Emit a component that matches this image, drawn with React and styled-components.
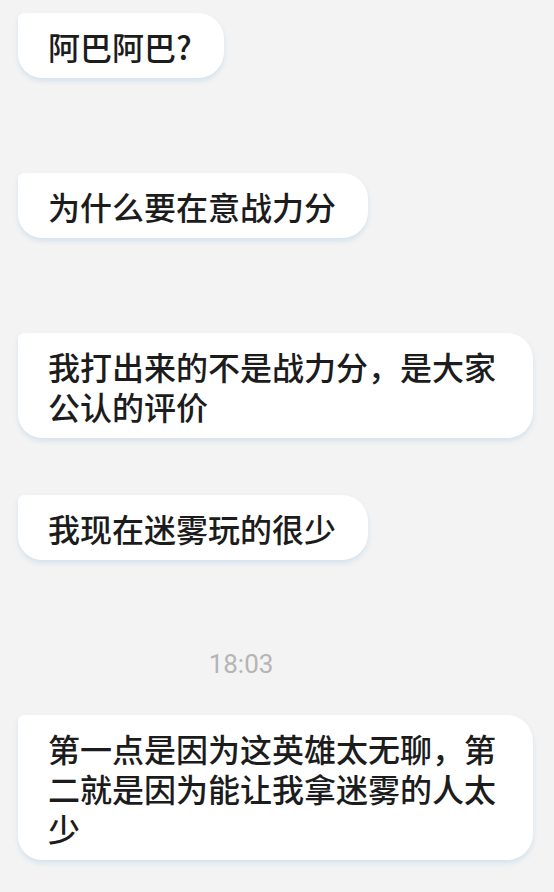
import styled, { createGlobalStyle } from 'styled-components'

const GlobalStyle = createGlobalStyle`
  html, body {
    margin: 0;
    padding: 0;
    background: #f3f3f3;
  }
  body {
    font-family: "Noto Sans CJK SC", "Noto Sans", sans-serif;
  }
`

const messages = [
  { id: 1, text: '阿巴阿巴?', top: 13 },
  { id: 2, text: '为什么要在意战力分', top: 95 },
  { id: 3, text: '我打出来的不是战力分，是大家公认的评价', top: 95 },
  { id: 4, text: '我现在迷雾玩的很少', top: 57 },
  { id: 'time', time: '18:03', top: 89 },
  { id: 5, text: '第一点是因为这英雄太无聊，第二就是因为能让我拿迷雾的人太少', top: 36 },
]

export default function App() {
  return (
    <>
      <GlobalStyle />
      <Chat>
        {messages.map((m) =>
          m.time ? (
            <TimeRow key={m.id} $top={m.top}>
              {m.time}
            </TimeRow>
          ) : (
            <Bubble key={m.id} $top={m.top}>
              {m.text}
            </Bubble>
          )
        )}
      </Chat>
    </>
  )
}

const Chat = styled.div`
  width: 554px;
  min-height: 892px;
  box-sizing: border-box;
  padding: 0 18px 30px 18px;
  display: flex;
  flex-direction: column;
  align-items: flex-start;
  background: #f3f3f3;
`

const Bubble = styled.div`
  margin-top: ${(p) => p.$top}px;
  max-width: 515px;
  box-sizing: border-box;
  padding: 12.5px 32px 12.5px 30px;
  background: #ffffff;
  border-radius: 6px 26px 26px 24px;
  box-shadow: 0 3px 5px rgba(175, 205, 230, 0.45);
  color: #1c1c1c;
  font-family: "Noto Sans CJK SC", "Noto Sans", sans-serif;
  font-size: 32px;
  font-weight: 500;
  line-height: 40px;
  word-break: break-all;
`

const TimeRow = styled.div`
  margin-top: ${(p) => p.$top}px;
  align-self: stretch;
  box-sizing: border-box;
  padding-right: 72px;
  text-align: center;
  font-family: Roboto, "Liberation Sans", sans-serif;
  font-size: 26px;
  line-height: 30px;
  color: #b5b5b5;
`
